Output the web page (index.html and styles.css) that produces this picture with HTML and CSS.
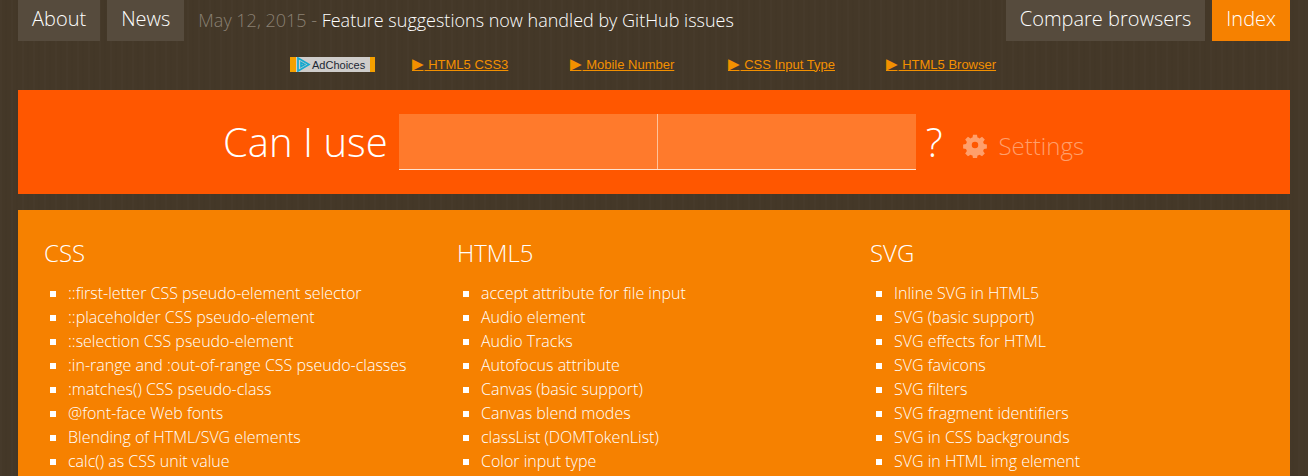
FILE: index.html
```html
<!DOCTYPE html>
<html lang="en">

<head>
    <meta charset="UTF-8">
    <meta name="viewport" content="width=device-width, initial-scale=1.0">
    <title>Can I use... Support tables for HTML5, CSS3, etc</title>
    <link rel="stylesheet" href="styles.css">
</head>

<body>
    <header class="topbar">
        <a class="tab" href="#">About</a>
        <a class="tab" href="#">News</a>
        <p class="news"><span class="date">May 12, 2015 - </span>Feature suggestions now handled by GitHub issues</p>
        <a class="tab" href="#">Compare browsers</a>
        <a class="tab active" href="#">Index</a>
    </header>

    <div class="ads">
        <div class="adchoices">
            <svg width="15" height="15" viewBox="0 0 15 15">
                <path d="M2 1 L13 7.5 L2 14 Z M5 5.5 L8.5 7.5 L5 9.5 Z" fill="none" stroke="#14a9cf" stroke-width="1.7"/>
            </svg>
            <span>AdChoices</span>
        </div>
        <a class="adlink" href="#"><span class="arrow">▶</span> HTML5 CSS3</a>
        <a class="adlink" href="#"><span class="arrow">▶</span> Mobile Number</a>
        <a class="adlink" href="#"><span class="arrow">▶</span> CSS Input Type</a>
        <a class="adlink" href="#"><span class="arrow">▶</span> HTML5 Browser</a>
    </div>

    <section class="search">
        <h1>Can I use</h1>
        <div class="fields">
            <div class="field"></div>
            <div class="field"></div>
        </div>
        <span class="question">?</span>
        <a class="settings" href="#">
            <svg width="26" height="26" viewBox="0 0 26 26">
                <path fill="#ff9f6b" fill-rule="evenodd" d="M10.8 1.5 h4.4 l.6 3.3 a8.6 8.6 0 0 1 2.2 .9 l2.8-1.9 3.1 3.1-1.9 2.8 a8.6 8.6 0 0 1 .9 2.2 l3.3 .6 v4.4 l-3.3 .6 a8.6 8.6 0 0 1-.9 2.2 l1.9 2.8-3.1 3.1-2.8-1.9 a8.6 8.6 0 0 1-2.2 .9 l-.6 3.3 h-4.4 l-.6-3.3 a8.6 8.6 0 0 1-2.2-.9 l-2.8 1.9-3.1-3.1 1.9-2.8 a8.6 8.6 0 0 1-.9-2.2 l-3.3-.6 v-4.4 l3.3-.6 a8.6 8.6 0 0 1 .9-2.2 l-1.9-2.8 3.1-3.1 2.8 1.9 a8.6 8.6 0 0 1 2.2-.9 Z M13 9.4 a3.6 3.6 0 1 0 0 7.2 a3.6 3.6 0 1 0 0-7.2 Z" transform="translate(1.3 1.3) scale(.9)"/>
            </svg>
            <span>Settings</span>
        </a>
    </section>

    <main class="index">
        <div class="column">
            <h2>CSS</h2>
            <ul>
                <li>::first-letter CSS pseudo-element selector</li>
                <li>::placeholder CSS pseudo-element</li>
                <li>::selection CSS pseudo-element</li>
                <li>:in-range and :out-of-range CSS pseudo-classes</li>
                <li>:matches() CSS pseudo-class</li>
                <li>@font-face Web fonts</li>
                <li>Blending of HTML/SVG elements</li>
                <li>calc() as CSS unit value</li>
            </ul>
        </div>
        <div class="column">
            <h2>HTML5</h2>
            <ul>
                <li>accept attribute for file input</li>
                <li>Audio element</li>
                <li>Audio Tracks</li>
                <li>Autofocus attribute</li>
                <li>Canvas (basic support)</li>
                <li>Canvas blend modes</li>
                <li>classList (DOMTokenList)</li>
                <li>Color input type</li>
            </ul>
        </div>
        <div class="column">
            <h2>SVG</h2>
            <ul>
                <li>Inline SVG in HTML5</li>
                <li>SVG (basic support)</li>
                <li>SVG effects for HTML</li>
                <li>SVG favicons</li>
                <li>SVG filters</li>
                <li>SVG fragment identifiers</li>
                <li>SVG in CSS backgrounds</li>
                <li>SVG in HTML img element</li>
            </ul>
        </div>
    </main>
</body>

</html>
```

FILE: styles.css
```css
html,
body {
    height: 100%;
    overflow: hidden;
}

body {
    margin: 0;
    padding: 0 18px;
    background-color: #443828;
    background-image: repeating-linear-gradient(90deg, rgba(255, 255, 255, 0.012) 0 2px, transparent 2px 5px, rgba(0, 0, 0, 0.015) 5px 7px, transparent 7px 11px);
    font-family: "Open Sans", "Liberation Sans", sans-serif;
    color: #fff;
}

a {
    color: inherit;
    text-decoration: none;
}

/* top navigation */
.topbar {
    display: flex;
    align-items: flex-start;
    gap: 7px;
    height: 41px;
}

.tab {
    height: 41px;
    padding: 0 14px;
    background: #564b3d;
    font-size: 20px;
    font-weight: 300;
    line-height: 38px;
}

.tab.active {
    background: #f68100;
}

.news {
    flex: 1;
    margin: 0 0 0 7px;
    font-size: 18px;
    font-weight: 300;
    line-height: 40px;
}

.date {
    color: #8a8073;
}

/* ad row */
.ads {
    display: flex;
    align-items: center;
    height: 15px;
    margin-top: 16px;
    padding-left: 272px;
    font-family: "Liberation Sans", "DejaVu Sans", Arial, sans-serif;
    font-size: 13px;
}

.adchoices {
    display: flex;
    align-items: center;
    gap: 1px;
    box-sizing: border-box;
    width: 85px;
    height: 15px;
    margin-right: 37px;
    padding: 0 0 0 5px;
    border-left: 1px solid #f5a000;
    border-right: 5px solid #f5a000;
    background: #cfcdcb;
    box-shadow: inset 5px 0 0 #f5a000;
    font-size: 11px;
    color: #1c2733;
}

.adlink {
    width: 158px;
    margin-bottom: 2px;
    color: #f39000;
    text-decoration: underline;
}

.arrow {
    margin-right: 1px;
    font-size: 15px;
    line-height: 1;
}

/* search banner */
.search {
    display: flex;
    align-items: center;
    justify-content: center;
    height: 104px;
    margin-top: 18px;
    background: #ff5700;
}

.search h1 {
    margin: 0 11px 0 0;
    font-size: 40px;
    font-weight: 300;
    line-height: 56px;
}

.fields {
    display: flex;
    width: 517px;
    height: 56px;
    border-bottom: 1px solid #ffe3d1;
    box-sizing: border-box;
}

.field {
    flex: 1;
    background: #ff7a2c;
}

.field + .field {
    border-left: 1px solid #ffc29a;
}

.question {
    margin: 0 20px 0 10px;
    font-size: 40px;
    font-weight: 300;
    line-height: 56px;
}

.settings {
    display: flex;
    align-items: center;
    gap: 10px;
    margin-top: 6px;
    margin-right: 1px;
    color: #ff9f6b;
    font-size: 24px;
    font-weight: 300;
}

/* feature lists */
.index {
    display: grid;
    grid-template-columns: repeat(3, 413px);
    height: 300px;
    margin-top: 16px;
    padding: 26px 0 0 26px;
    background: #f68100;
}

.column h2 {
    margin: 0 0 11px;
    font-size: 24px;
    font-weight: 300;
    line-height: 34px;
}

.column ul {
    margin: 0;
    padding: 0 0 0 24px;
    list-style: square;
}

.column li {
    font-size: 16px;
    font-weight: 300;
    line-height: 24px;
}
```
